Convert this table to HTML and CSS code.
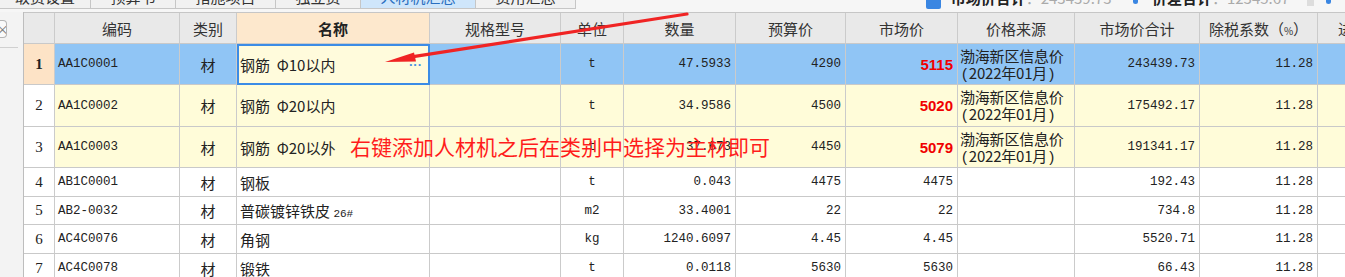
FILE: index.html
```html
<!DOCTYPE html>
<html lang="zh-CN">
<head>
<meta charset="utf-8">
<title>人材机汇总</title>
<link rel="stylesheet" href="styles.css">
</head>
<body>
<div class="page">
  <div class="tabbar">
    <div class="tab w90"><span>取费设置</span></div>
    <div class="tab w85"><span>预算书</span></div>
    <div class="tab w100"><span>措施项目</span></div>
    <div class="tab w85"><span>独立费</span></div>
    <div class="tab w115 active"><span>人材机汇总</span></div>
    <div class="tab w100"><span>费用汇总</span></div>
    <div class="summary">
      <div class="chk"></div>
      <span class="sum-label">市场价合计</span><span class="sum-val">：243439.73</span>
      <span class="dot"></span>
      <span class="sum-label">价差合计</span><span class="sum-val">：12345.67</span>
      <span class="gbox"></span>
      <span class="dot"></span>
    </div>
  </div>
  <div class="main">
    <div class="gutter">
      <div class="gbtn">×</div>
      <div class="gline"></div>
    </div>
    <div class="grid">
      <div class="c h"></div>
      <div class="c h">编码</div>
      <div class="c h">类别</div>
      <div class="c h hn">名称</div>
      <div class="c h">规格型号</div>
      <div class="c h">单位</div>
      <div class="c h">数量</div>
      <div class="c h">预算价</div>
      <div class="c h">市场价</div>
      <div class="c h">价格来源</div>
      <div class="c h">市场价合计</div>
      <div class="c h"><span>除税系数（<small>%</small>）</span></div>
      <div class="c h hl">进项税额</div>

      <div class="c rn rn1">1</div>
      <div class="c b mono">AA1C0001</div>
      <div class="c b ctr">材</div>
      <div class="c sel">钢筋&nbsp; Φ10以内<span class="more">···</span></div>
      <div class="c b"></div>
      <div class="c b ctr mono">t</div>
      <div class="c b num mono">47.5933</div>
      <div class="c b num mono">4290</div>
      <div class="c b num red">5115</div>
      <div class="c b src"><span>渤海新区信息价<br><span class="paren">(</span>2022年01月<span class="paren">)</span></span></div>
      <div class="c b num mono">243439.73</div>
      <div class="c b num mono">11.28</div>
      <div class="c b"></div>

      <div class="c rn">2</div>
      <div class="c y mono">AA1C0002</div>
      <div class="c y ctr">材</div>
      <div class="c y">钢筋&nbsp; Φ20以内</div>
      <div class="c y"></div>
      <div class="c y ctr mono">t</div>
      <div class="c y num mono">34.9586</div>
      <div class="c y num mono">4500</div>
      <div class="c y num red">5020</div>
      <div class="c y src"><span>渤海新区信息价<br><span class="paren">(</span>2022年01月<span class="paren">)</span></span></div>
      <div class="c y num mono">175492.17</div>
      <div class="c y num mono">11.28</div>
      <div class="c y"></div>

      <div class="c rn">3</div>
      <div class="c y mono">AA1C0003</div>
      <div class="c y ctr">材</div>
      <div class="c y">钢筋&nbsp; Φ20以外</div>
      <div class="c y"></div>
      <div class="c y ctr mono">t</div>
      <div class="c y num mono">37.673</div>
      <div class="c y num mono">4450</div>
      <div class="c y num red">5079</div>
      <div class="c y src"><span>渤海新区信息价<br><span class="paren">(</span>2022年01月<span class="paren">)</span></span></div>
      <div class="c y num mono">191341.17</div>
      <div class="c y num mono">11.28</div>
      <div class="c y"></div>

      <div class="c rn">4</div>
      <div class="c mono">AB1C0001</div>
      <div class="c ctr">材</div>
      <div class="c">钢板</div>
      <div class="c"></div>
      <div class="c ctr mono">t</div>
      <div class="c num mono">0.043</div>
      <div class="c num mono">4475</div>
      <div class="c num mono">4475</div>
      <div class="c"></div>
      <div class="c num mono">192.43</div>
      <div class="c num mono">11.28</div>
      <div class="c"></div>

      <div class="c rn">5</div>
      <div class="c mono">AB2-0032</div>
      <div class="c ctr">材</div>
      <div class="c"><span>普碳镀锌铁皮 <span class="mono sm">26#</span></span></div>
      <div class="c"></div>
      <div class="c ctr mono">m2</div>
      <div class="c num mono">33.4001</div>
      <div class="c num mono">22</div>
      <div class="c num mono">22</div>
      <div class="c"></div>
      <div class="c num mono">734.8</div>
      <div class="c num mono">11.28</div>
      <div class="c"></div>

      <div class="c rn">6</div>
      <div class="c mono">AC4C0076</div>
      <div class="c ctr">材</div>
      <div class="c">角钢</div>
      <div class="c"></div>
      <div class="c ctr mono">kg</div>
      <div class="c num mono">1240.6097</div>
      <div class="c num mono">4.45</div>
      <div class="c num mono">4.45</div>
      <div class="c"></div>
      <div class="c num mono">5520.71</div>
      <div class="c num mono">11.28</div>
      <div class="c"></div>

      <div class="c rn">7</div>
      <div class="c mono">AC4C0078</div>
      <div class="c ctr">材</div>
      <div class="c">锻铁</div>
      <div class="c"></div>
      <div class="c ctr mono">t</div>
      <div class="c num mono">0.0118</div>
      <div class="c num mono">5630</div>
      <div class="c num mono">5630</div>
      <div class="c"></div>
      <div class="c num mono">66.43</div>
      <div class="c num mono">11.28</div>
      <div class="c"></div>
    </div>
  </div>
  <div class="note">右键添加人材机之后在类别中选择为主材即可</div>
  <svg class="arrow" width="1345" height="277" viewBox="0 0 1345 277">
    <line x1="687" y1="14" x2="410" y2="57.2" stroke="#f02424" stroke-width="3.2" stroke-linecap="round"/>
    <polygon points="385,62 414,52.5 416,61.5" fill="#f02424"/>
  </svg>
</div>
</body>
</html>
```

FILE: styles.css
```css
html, body {
  margin: 0;
  padding: 0;
  background: #fff;
}

body {
  font-family: "Noto Sans CJK SC", "Noto Sans", sans-serif;
  color: #222;
}

.page {
  position: relative;
  width: 1345px;
  height: 277px;
  overflow: hidden;
  background: #fff;
}

/* top tab strip (cut off) */
.tabbar {
  height: 12px;
  display: flex;
  background: #f6f6f6;
  overflow: hidden;
}

.tab {
  box-sizing: border-box;
  height: 9px;
  border-right: 1px solid #c6c6c6;
  border-bottom: 1px solid #c6c6c6;
  background: #f1f1f1;
  overflow: hidden;
  display: flex;
  justify-content: center;
  flex: none;
}

.tab span {
  display: block;
  font-size: 15px;
  line-height: 20px;
  margin-top: -13px;
  color: #333;
}

.tab.active {
  background: #cfe6fb;
}

.tab.active span {
  color: #2a6fc0;
}

.w90 { width: 91px; }
.w85 { width: 85px; }
.w100 { width: 100px; }
.w115 { width: 115px; }

.summary {
  display: flex;
  align-items: flex-start;
  margin-left: 350px;
  height: 9px;
  overflow: hidden;
  white-space: nowrap;
}

.chk {
  width: 17px;
  height: 17px;
  margin-top: -8px;
  background: #3a86e2;
  border-radius: 2px;
  margin-right: 10px;
}

.sum-label {
  font-size: 15px;
  line-height: 20px;
  margin-top: -12px;
  font-weight: bold;
  color: #222;
}

.sum-val {
  font-size: 15px;
  line-height: 20px;
  margin-top: -12px;
  color: #aaa;
  width: 110px;
  overflow: hidden;
}

.dot {
  width: 6px;
  height: 6px;
  margin: -2px 14px 0 12px;
  background: #3a86e2;
  border-radius: 0 0 3px 3px;
}

.gbox {
  width: 8px;
  height: 8px;
  margin-top: -2px;
  background: #ddd;
}

/* body */
.main {
  display: flex;
}

.gutter {
  position: relative;
  box-sizing: border-box;
  width: 24px;
  flex: none;
  background: #f3f3f3;
  border-right: 1px solid #bdbdbd;
  height: 270px;
}

.gbtn {
  position: absolute;
  left: 0;
  top: 8px;
  width: 7px;
  height: 18px;
  box-sizing: border-box;
  border: 1px solid #b5b5b5;
  border-left: none;
  border-radius: 0 4px 4px 0;
  background: #fafafa;
  overflow: hidden;
  font-size: 13px;
  line-height: 16px;
  color: #777;
  text-indent: -4px;
}

.gline {
  position: absolute;
  left: 0;
  top: 35px;
  width: 18px;
  height: 1px;
  background: #d0d0d0;
}

.grid {
  display: grid;
  grid-template-columns: 31px 125px 57px 193px 131px 63px 112px 110px 112px 117px 125px 118px 90px;
  grid-template-rows: 31px 41px 42px 41px 29px 28px 29px 29px;
  border-top: 1px solid #c6c6c6;
  flex: none;
}

.c {
  box-sizing: border-box;
  border-right: 1px solid #cbcbcb;
  border-bottom: 1px solid #c9c9c9;
  display: flex;
  align-items: center;
  overflow: hidden;
  white-space: nowrap;
  font-size: 15px;
  padding: 0 3px;
  background: #fff;
}

.h {
  background: #e9e9e9;
  justify-content: center;
  color: #333;
  padding: 0;
}

.h small {
  font-size: 10px;
}

.hn {
  background: #fde8cd;
  font-weight: bold;
  color: #222;
}

.hl {
  justify-content: flex-start;
  padding-left: 20px;
}

.rn {
  justify-content: center;
  font-family: "Liberation Serif", serif;
  font-size: 15px;
  padding: 0;
  background: #fff;
}

.rn1 {
  background: #fde3c6;
  font-weight: bold;
}

.b {
  background: #90c5f5;
}

.y {
  background: #fffcd9;
}

.sel {
  position: relative;
  background: #fffbdc;
  border: 2px solid #3b8ce6;
  padding-left: 1px;
}

.more {
  position: absolute;
  right: 6px;
  top: 13px;
  font-family: "Liberation Sans", sans-serif;
  font-size: 13px;
  line-height: 12px;
  font-weight: bold;
  color: #4a90e2;
  letter-spacing: 0;
}

.mono {
  font-family: "Liberation Mono", monospace;
  font-size: 12.5px;
  color: #222;
}

.sm {
  font-size: 11px;
}

.ctr {
  justify-content: center;
}

.num {
  justify-content: flex-end;
  padding-right: 4px;
}

.red {
  font-family: "Liberation Sans", Arial, sans-serif;
  font-weight: bold;
  font-size: 15px;
  color: #f00000;
  padding-right: 4px;
}

.src {
  font-size: 15px;
  line-height: 17px;
  white-space: nowrap;
  padding-left: 2px;
  letter-spacing: -0.2px;
}

.paren {
  font-family: "Liberation Sans", sans-serif;
  font-size: 15px;
  padding: 0 2px;
}

.note {
  position: absolute;
  left: 350px;
  top: 135px;
  font-size: 21px;
  line-height: 22px;
  color: #ff1c1c;
  white-space: nowrap;
}

.arrow {
  position: absolute;
  left: 0;
  top: 0;
  pointer-events: none;
}
```
